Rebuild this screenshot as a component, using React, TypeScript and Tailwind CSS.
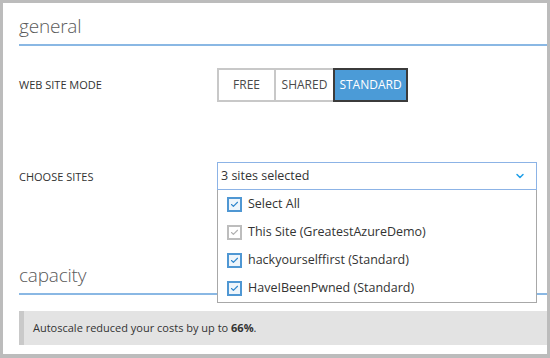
import { ChevronDown, Check } from "lucide-react";

const font = { fontFamily: '"Open Sans", "Segoe UI", sans-serif' };

const Box = ({ disabled }: { disabled?: boolean }) => (
  <span
    className={`w-[15px] h-[15px] flex items-center justify-center border-2 ${
      disabled ? "border-[#bdbdbd] bg-white" : "border-[#4f97d3] bg-[#eef5fb]"
    }`}
  >
    <Check
      className={`w-[9px] h-[9px] ${disabled ? "text-[#b0b0b0]" : "text-[#2f86cc]"}`}
      strokeWidth={3}
    />
  </span>
);

const Heading = ({ children }: { children: string }) => (
  <div className="pt-[9px] pb-[4px] border-b-2 border-[#8ab8e4]">
    <h2 className="text-[19px] leading-[28px] font-light text-[#5a5a5a] tracking-[-0.2px]">{children}</h2>
  </div>
);

export default function App() {
  const sites = [
    { label: "Select All" },
    { label: "This Site (GreatestAzureDemo)", disabled: true },
    { label: "hackyourselffirst (Standard)" },
    { label: "HaveIBeenPwned (Standard)" },
  ];

  return (
    <div
      className="w-[550px] h-[358px] overflow-hidden bg-white border-[#bcbcbc] border-t-[3px] border-l-[3px] border-r-[3px] border-b-4 pl-4"
      style={font}
    >
      <Heading>general</Heading>

      <div className="mt-[22px] flex items-center">
        <div className="w-[198px] text-[11px] text-[#333] uppercase">Web site mode</div>
        <div className="flex h-[34px] text-[12px]">
          <button className="w-[59px] border-2 border-[#c8c8c8] text-[#4a4a4a] bg-white">FREE</button>
          <button className="w-[61px] -ml-[2px] border-2 border-[#c8c8c8] text-[#4a4a4a] bg-white">SHARED</button>
          <button className="w-[75px] -ml-[2px] border-2 border-[#3b3b3b] bg-[#4b9bd7] text-white">STANDARD</button>
        </div>
      </div>

      <div className="mt-[60px] flex items-center">
        <div className="w-[198px] text-[11px] text-[#333] uppercase pt-[3px]">Choose sites</div>
        <div className="relative w-[320px]">
          <div className="h-[28px] border border-[#8cb3e6] flex items-center justify-between pl-[3px] pr-[10px] text-[12.5px] text-[#333]">
            <span>3 sites selected</span>
            <ChevronDown className="w-[12px] h-[12px] text-[#1f9fe8]" strokeWidth={3} />
          </div>
          <div className="absolute left-0 top-[28px] w-[320px] bg-white border border-t-0 border-[#a8a8a8] z-10">
            {sites.map((s) => (
              <div key={s.label} className="h-[28px] flex items-center pl-[9px] gap-[6px] text-[12.5px] text-[#333]">
                <Box disabled={s.disabled} />
                <span>{s.label}</span>
              </div>
            ))}
          </div>
        </div>
      </div>

      <div className="mt-[62px]">
        <Heading>capacity</Heading>
      </div>

      <div className="mt-4 h-[34px] flex items-center bg-[#e3e3e3] border-l-[5px] border-[#c9c9c9] pl-[9px] text-[11px] text-[#333]">
        <span>
          Autoscale reduced your costs by up to <b>66%</b>.
        </span>
      </div>
    </div>
  );
}
